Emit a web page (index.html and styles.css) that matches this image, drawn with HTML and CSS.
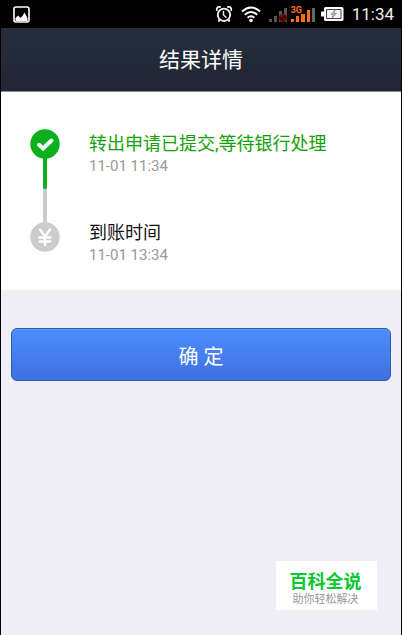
FILE: index.html
```html
<!DOCTYPE html>
<html lang="zh-CN">
<head>
<meta charset="utf-8">
<meta name="viewport" content="width=device-width, initial-scale=1">
<title>结果详情</title>
<link rel="stylesheet" href="styles.css">
</head>
<body>
<div class="status">
  <svg class="status-photo" width="18" height="18" viewBox="0 0 18 18" aria-hidden="true">
    <rect x="1" y="2" width="15" height="15" rx="2" fill="none" stroke="#fff" stroke-width="1.600"/>
    <path d="M2.500 16V13L5 10.500L7.500 13L9.500 11L11.500 7.500L14.500 13V16Z" fill="#fff"/>
  </svg>
  <svg width="18" height="18" viewBox="0 0 18 18" fill="none" stroke="#eee" stroke-width="1.900" stroke-linecap="round" aria-hidden="true">
    <circle cx="9" cy="9.800" r="6.200"/>
    <path d="M8.500 6.500V10L11 12.300" stroke-width="1.400"/>
    <path d="M1.800 5C1.500 2.500 3 1.500 5 2M16.200 5C16.500 2.500 15 1.500 13 2M4.500 14.500L3.800 16M13.500 14.500L14.200 16"/>
  </svg>
  <svg class="status-wifi" width="20" height="18" viewBox="0 0 20 18" fill="none" stroke="#fff" stroke-width="2" aria-hidden="true">
    <path d="M1 6.500Q10 -1.500 19 6.500M3.800 9.800Q10 4.200 16.200 9.800M6.600 12.800Q10 9.800 13.400 12.800"/>
    <circle cx="10" cy="15.500" r="1.800" fill="#fff" stroke="none"/>
  </svg>
  <svg class="status-signal" width="20" height="18" viewBox="0 0 20 18" aria-hidden="true">
    <path d="M1 14h3v3H1zM6 11h3v6H6zM11 6h3v11h-3zM16 3h3v14h-3z" fill="#555"/>
    <circle cx="15" cy="13" r="3.500" fill="#250000" stroke="#800b0b" stroke-width="1.400"/>
    <path d="M12.500 10.500L17.500 15.500" stroke="#800b0b" stroke-width="1.400"/>
  </svg>
  <span class="network">
    <span class="network-name">3G</span>
    <svg width="24" height="18" viewBox="0 0 24 18" aria-hidden="true">
      <path d="M0 14h3v3H0zM5 11h3v6H5zM10 9h4v8h-4zM16 5h3v12h-3z" fill="#ff6d13"/>
      <path d="M21 3h3v14h-3z" fill="#666"/>
    </svg>
  </span>
  <svg class="status-battery" width="23" height="14" viewBox="0 0 23 14" aria-hidden="true">
    <path d="M0 4.500h3V1.500Q3 0 4.500 0H21Q22.500 0 22.500 1.500V12.500Q22.500 14 21 14H4.500Q3 14 3 12.500V9.500H0z" fill="#fff"/>
    <path d="M5.500 2.500h14.500v9H5.500z" fill="#f4f4f4" stroke="#444" stroke-width="1"/>
    <path d="M14 3L10 7.500H12.500L11 11L15.500 6.500H13z" fill="#ccc" stroke="#777" stroke-width=".7"/>
  </svg>
  <time class="clock">11:34</time>
</div>
<div class="screen">
  <header class="header"><h1>结果详情</h1></header>
  <main>
    <section class="progress">
      <svg width="30" height="123" viewBox="0 0 30 123" aria-hidden="true">
        <path d="M15 58V95" stroke="#ccc" stroke-width="4"/>
        <path d="M15 15V58" stroke="#0bb11d" stroke-width="4" stroke-linecap="round"/>
        <circle cx="15" cy="15" r="14.700" fill="#0bb11d"/>
        <path d="M9 15.800L13 19.500L21.500 11.500" fill="none" stroke="#fff" stroke-width="4" stroke-linecap="round"/>
        <circle cx="15" cy="108" r="14.700" fill="#ccc"/>
        <path d="M10 100.500L15 107.500L20 100.500M15 107V116M9.500 108.500H20.500M9.500 112.500H20.500" fill="none" stroke="#fff" stroke-width="2.300" stroke-linecap="round"/>
      </svg>
      <ol class="steps">
        <li>
          <p class="step-title step-done">转出申请已提交,等待银行处理</p>
          <time class="step-time">11-01 11:34</time>
        </li>
        <li>
          <p class="step-title">到账时间</p>
          <time class="step-time">11-01 13:34</time>
        </li>
      </ol>
    </section>
    <button class="confirm" type="button">确 定</button>
  </main>
  <aside class="badge">
    <strong>百科全说</strong>
    <span>助你轻松解决</span>
  </aside>
</div>
</body>
</html>
```
FILE: styles.css
```css
* {
  box-sizing: border-box;
}

body {
  display: flex;
  flex-direction: column;
  min-height: 100vh;
  margin: 0;
  background: #000;
  font-family: Roboto, "Noto Sans CJK SC", sans-serif;
}

.status {
  display: flex;
  align-items: center;
  height: 28px;
  padding: 0 8px 0 13px;
  color: #fff;
}

.status-photo {
  margin-right: auto;
}

.status-wifi {
  margin-left: 8px;
}

.status-signal {
  margin-left: 7px;
}

.network {
  position: relative;
  display: flex;
  margin-left: 3px;
}

.network-name {
  position: absolute;
  top: 1px;
  left: 0;
  color: #ff6d13;
  font-size: 9px;
  font-weight: 700;
  line-height: 8px;
}

.status-battery {
  margin-left: 6px;
}

.clock {
  margin-left: 8px;
  color: #eee;
  font-size: 17px;
  line-height: 30px;
}

.screen {
  position: relative;
  flex: 1;
  margin: 0 1px;
  background: #efeef4;
}

.header {
  height: 64px;
  border-bottom: 1px solid #858891;
  background: linear-gradient(#262d3c, #202633);
  color: #fff;
  text-align: center;
}

.header h1 {
  margin: 0;
  font-size: 21px;
  font-weight: 400;
  line-height: 65px;
}

.progress {
  display: flex;
  align-items: flex-start;
  gap: 29px;
  padding: 37px 29px 25px;
  background: #fff;
}

.steps {
  display: flex;
  flex: 1;
  flex-direction: column;
  gap: 45px;
  margin: 0;
  padding: 3px 0 0;
  list-style: none;
}

.step-title {
  margin: 0;
  color: #111;
  font-size: 18px;
  line-height: 24px;
}

.step-done {
  color: #159f09;
}

.step-time {
  display: block;
  color: #999;
  font-size: 15px;
  line-height: 20px;
}

.confirm {
  display: block;
  width: calc(100% - 20px);
  height: 53px;
  margin: 38px 10px 0;
  padding: 2px 0 0;
  border: 1px solid #285fa5;
  border-radius: 6px;
  background: linear-gradient(#4d8dfc, #4070df);
  box-shadow: inset 0 1px #5b99fb;
  color: #fff;
  font: inherit;
  font-size: 20px;
}

.badge {
  position: absolute;
  right: 24px;
  bottom: 25px;
  width: 101px;
  padding: 9px 2px 4px 0;
  background: #fff;
  text-align: center;
}

.badge strong,
.badge span {
  display: block;
}

.badge strong {
  color: #05c92f;
  font-size: 18px;
  line-height: 24px;
}

.badge span {
  color: #999;
  font-size: 11px;
  line-height: 12px;
}
```
